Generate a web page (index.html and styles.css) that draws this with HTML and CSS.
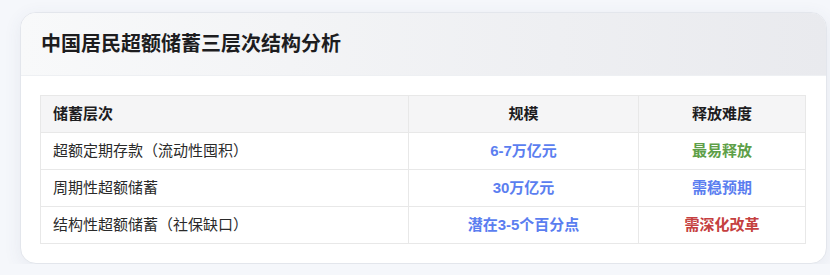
FILE: index.html
```html
<!DOCTYPE html>
<html lang="zh-CN">
<head>
<meta charset="utf-8">
<title>中国居民超额储蓄三层次结构分析</title>
<link rel="stylesheet" href="styles.css">
</head>
<body>
<div class="card">
  <div class="card-header">
    <h2 class="card-title">中国居民超额储蓄三层次结构分析</h2>
  </div>
  <div class="card-body">
    <table class="data-table">
      <thead>
        <tr>
          <th class="col-left">储蓄层次</th>
          <th class="col-mid">规模</th>
          <th class="col-right">释放难度</th>
        </tr>
      </thead>
      <tbody>
        <tr>
          <td>超额定期存款（流动性囤积）</td>
          <td class="center blue">6-7万亿元</td>
          <td class="center green">最易释放</td>
        </tr>
        <tr>
          <td>周期性超额储蓄</td>
          <td class="center blue">30万亿元</td>
          <td class="center blue">需稳预期</td>
        </tr>
        <tr>
          <td>结构性超额储蓄（社保缺口）</td>
          <td class="center blue">潜在3-5个百分点</td>
          <td class="center red">需深化改革</td>
        </tr>
      </tbody>
    </table>
  </div>
</div>
</body>
</html>
```
FILE: styles.css
```css
html, body {
  margin: 0;
  padding: 0;
  background: #f5f7fb;
}
body {
  padding: 12px 3px 0 20px;
  font-family: "Liberation Sans", "Noto Sans CJK SC", sans-serif;
  color: #222;
}
.card {
  background: #fff;
  border: 1px solid #e3e6ec;
  border-radius: 16px;
  box-shadow: 0 4px 18px rgba(60, 80, 120, 0.08);
  overflow: hidden;
}
.card-header {
  height: 62px;
  display: flex;
  align-items: center;
  padding: 0 20px;
  background: linear-gradient(90deg, #f8f9fa 0%, #e9eaee 100%);
  border-bottom: 1px solid #eef0f3;
}
.card-title {
  margin: 0;
  font-size: 20px;
  font-weight: 700;
  color: #1d1d1f;
  line-height: 1;
}
.card-body {
  padding: 19px 20px 19px 19px;
}
.data-table {
  width: 100%;
  border-collapse: collapse;
  font-size: 15px;
}
.data-table th,
.data-table td {
  border: 1px solid #e8e8e8;
  padding: 8px 12px;
  line-height: 20px;
  height: 20px;
}
.data-table th {
  background: #f5f5f6;
  font-weight: 700;
  color: #1d1d1f;
}
.col-left { text-align: left; width: 343px; }
.col-mid { text-align: center; width: 205px; }
.col-right { text-align: center; }
.data-table td { color: #2a2a2a; }
.center { text-align: center; font-weight: 700; }
.data-table td.blue { color: #5b7ef0; }
.data-table td.green { color: #5e9f48; }
.data-table td.red { color: #c54040; }
```
